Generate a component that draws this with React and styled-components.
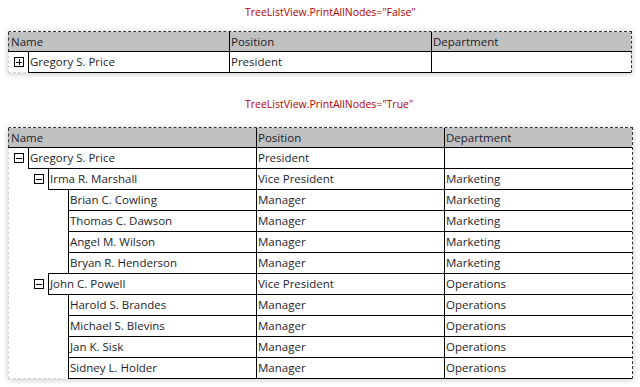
import React from 'react';
import styled, { createGlobalStyle } from 'styled-components';

const GlobalStyle = createGlobalStyle`
  html, body {
    margin: 0;
    padding: 0;
    background: #ffffff;
  }
  body {
    font-family: "Open Sans", "Liberation Sans", sans-serif;
  }
`;

const Page = styled.div`
  width: 640px;
  height: 387px;
  padding: 4px 0 0 8px;
  box-sizing: border-box;
  display: flex;
  flex-direction: column;
`;

const Title = styled.div`
  height: 16px;
  line-height: 16px;
  margin: ${(p) => p.$top}px 0 ${(p) => p.$bottom}px 237px;
  font-size: 10.5px;
  color: #b80000;
  white-space: nowrap;
`;

const Sheet = styled.div`
  width: ${(p) => p.$width}px;
  box-sizing: border-box;
  border-top: 1px dashed #333;
  border-right: 1px dashed #333;
  border-left: 1px dashed #d4d4d4;
  border-bottom: 1px dashed #d4d4d4;
  box-shadow: 0 1px 6px rgba(0, 0, 0, 0.22);
  background: #fff;
  display: flex;
  flex-direction: column;
`;

const HeaderRow = styled.div`
  display: grid;
  grid-template-columns: ${(p) => p.$cols};
  height: 20px;
  box-sizing: border-box;
  margin-left: -1px;
  border-left: 1px dashed #333;
  border-bottom: 1px solid #000;
  background: #c0c0c0;
`;

const HeaderCell = styled.div`
  padding-left: ${(p) => (p.$first ? 2 : 1)}px;
  border-left: ${(p) => (p.$first ? 'none' : '1px solid #000')};
  font-size: 11.5px;
  line-height: 19px;
  color: #1e1e2a;
  white-space: nowrap;
  overflow: hidden;
`;

const Row = styled.div`
  display: grid;
  grid-template-columns: ${(p) => p.$cols};
  height: 22px;
  margin-top: -1px;
  margin-bottom: ${(p) => (p.$last ? -1 : 0)}px;
`;

const NameCell = styled.div`
  display: flex;
  padding-left: ${(p) => p.$level * 20}px;
  min-width: 0;
`;

const ExpanderSlot = styled.div`
  width: 19px;
  flex: none;
  display: flex;
  align-items: center;
  justify-content: center;
`;

const Cell = styled.div`
  flex: 1;
  min-width: 0;
  box-sizing: border-box;
  border-top: 1px solid #000;
  border-bottom: 1px solid #000;
  border-left: 1px solid #000;
  padding-left: 1px;
  font-size: 11.5px;
  line-height: 20px;
  color: #1e1e2a;
  white-space: nowrap;
  overflow: hidden;
`;

const Expander = ({ open }) => (
  <svg width="10" height="10" viewBox="0 0 10 10" shapeRendering="crispEdges">
    <rect x="0.5" y="0.5" width="9" height="9" fill="#fff" stroke="#000" />
    <line x1="2" y1="5" x2="8" y2="5" stroke="#000" />
    {!open && <line x1="5" y1="2" x2="5" y2="8" stroke="#000" />}
  </svg>
);

const people = [
  { name: 'Gregory S. Price', position: 'President', dept: '', level: 0, kids: true },
  { name: 'Irma R. Marshall', position: 'Vice President', dept: 'Marketing', level: 1, kids: true },
  { name: 'Brian C. Cowling', position: 'Manager', dept: 'Marketing', level: 2 },
  { name: 'Thomas C. Dawson', position: 'Manager', dept: 'Marketing', level: 2 },
  { name: 'Angel M. Wilson', position: 'Manager', dept: 'Marketing', level: 2 },
  { name: 'Bryan R. Henderson', position: 'Manager', dept: 'Marketing', level: 2 },
  { name: 'John C. Powell', position: 'Vice President', dept: 'Operations', level: 1, kids: true },
  { name: 'Harold S. Brandes', position: 'Manager', dept: 'Operations', level: 2 },
  { name: 'Michael S. Blevins', position: 'Manager', dept: 'Operations', level: 2 },
  { name: 'Jan K. Sisk', position: 'Manager', dept: 'Operations', level: 2 },
  { name: 'Sidney L. Holder', position: 'Manager', dept: 'Operations', level: 2 },
];

const TreeList = ({ width, cols, rows, open }) => (
  <Sheet $width={width}>
    <HeaderRow $cols={cols}>
      <HeaderCell $first>Name</HeaderCell>
      <HeaderCell>Position</HeaderCell>
      <HeaderCell>Department</HeaderCell>
    </HeaderRow>
    {rows.map((r, i) => (
      <Row key={r.name} $cols={cols} $last={i === rows.length - 1}>
        <NameCell $level={r.level}>
          <ExpanderSlot>{r.kids && <Expander open={open} />}</ExpanderSlot>
          <Cell>{r.name}</Cell>
        </NameCell>
        <Cell>{r.position}</Cell>
        <Cell>{r.dept}</Cell>
      </Row>
    ))}
  </Sheet>
);

const App = () => (
  <>
    <GlobalStyle />
    <Page>
      <Title $top={0} $bottom={11}>TreeListView.PrintAllNodes="False"</Title>
      <TreeList width={624} cols="220px 202px 1fr" rows={people.slice(0, 1)} open={false} />
      <Title $top={23} $bottom={15}>TreeListView.PrintAllNodes="True"</Title>
      <TreeList width={625} cols="247px 188px 1fr" rows={people} open />
    </Page>
  </>
);

export default App;
